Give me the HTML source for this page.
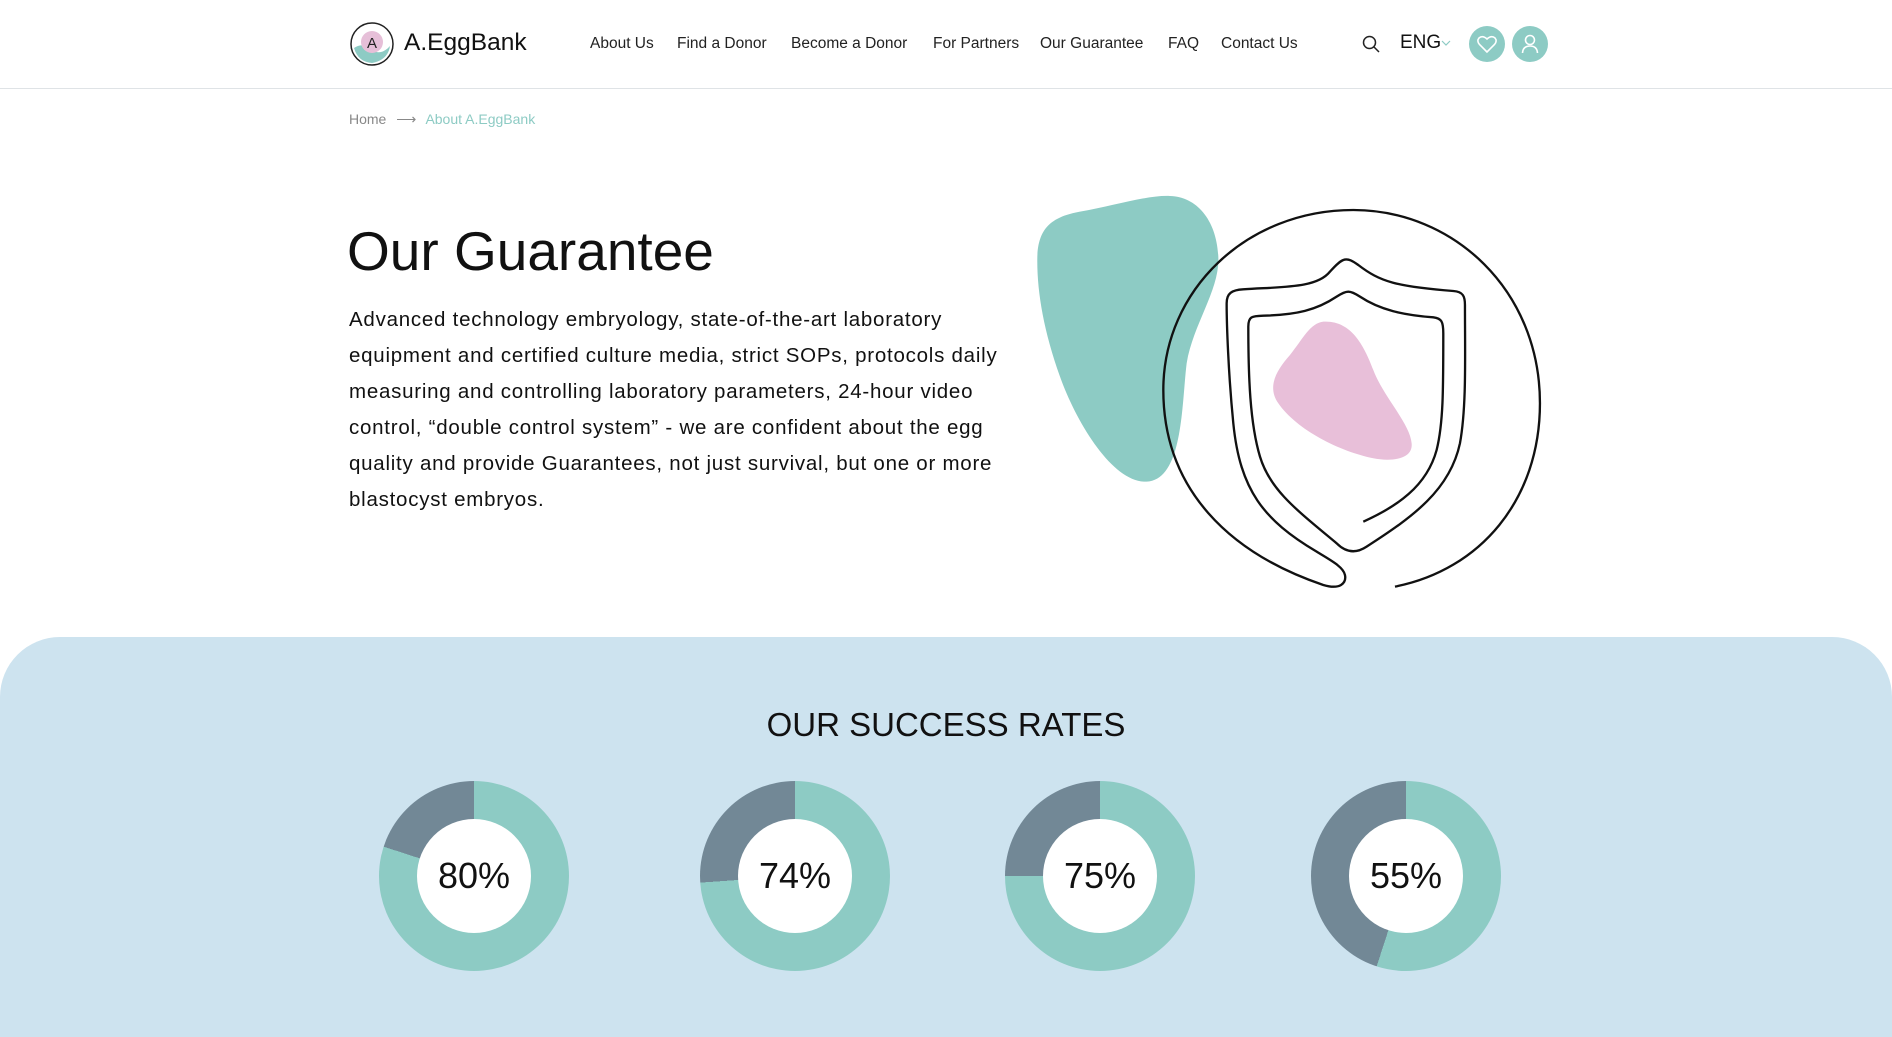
<!DOCTYPE html>
<html><head><meta charset="utf-8"><style>
*{margin:0;padding:0;box-sizing:border-box}
body{width:1892px;height:963px;overflow:hidden;background:#fff;font-family:"Liberation Sans",sans-serif;color:#111;position:relative}
.a{position:absolute;white-space:nowrap}
.nav{top:35px;font-size:15.5px;color:#222}
.hr{position:absolute;left:0;top:88px;width:1892px;height:1px;background:#dfe3e6}
.blue{position:absolute;left:0;top:637px;width:1892px;height:400px;background:#cde3ef;border-radius:60px 60px 0 0}
.d{position:absolute;width:190px;height:190px;border-radius:50%;top:781px}
.d i{position:absolute;left:38px;top:38px;width:114px;height:114px;border-radius:50%;background:#fff;font-style:normal;font-size:36px;text-align:center;line-height:114px;color:#111}
.c{position:absolute;width:36px;height:36px;border-radius:50%;background:#8dcbc4;top:26px}
</style></head><body>
<svg class="a" style="left:348px;top:20px" width="48" height="48" viewBox="0 0 48 48">
<circle cx="24" cy="24" r="21" fill="none" stroke="#222" stroke-width="1.5"/>
<path d="M6 28 Q15 22 24 30 Q33 36 42 26 Q40 40 24 43 Q10 42 6 28Z" fill="#8dcbc4"/>
<circle cx="24" cy="22" r="11" fill="#e6bfd8"/>
<text x="24" y="28" font-size="15" text-anchor="middle" font-family="Liberation Sans" fill="#222">A</text>
</svg>
<div class="a" style="left:404px;top:29px;font-size:24.5px;color:#111">A.EggBank</div>
<div class="a nav" style="left:590px">About Us</div>
<div class="a nav" style="left:677px">Find a Donor</div>
<div class="a nav" style="left:791px">Become a Donor</div>
<div class="a nav" style="left:933px">For Partners</div>
<div class="a nav" style="left:1040px">Our Guarantee</div>
<div class="a nav" style="left:1168px">FAQ</div>
<div class="a nav" style="left:1221px">Contact Us</div>
<svg class="a" style="left:1362px;top:35px" width="18" height="18" viewBox="0 0 18 18"><circle cx="7.5" cy="7.5" r="6" fill="none" stroke="#222" stroke-width="1.5"/><path d="M12 12l5 5" stroke="#222" stroke-width="1.5"/></svg>
<div class="a" style="left:1400px;top:32px;font-size:19px;color:#111">ENG</div>
<svg class="a" style="left:1441px;top:40px" width="10" height="7"><path d="M1 1l4 4 4-4" fill="none" stroke="#8dcbc4" stroke-width="1.2"/></svg>
<div class="c" style="left:1469px"><svg width="36" height="36" viewBox="0 0 36 36"><path d="M18 26 L10.5 18.5 Q7.5 15 10 12 Q13.5 9 18 13 Q22.5 9 26 12 Q28.5 15 25.5 18.5Z" fill="none" stroke="#fff" stroke-width="1.6"/></svg></div>
<div class="c" style="left:1512px"><svg width="36" height="36" viewBox="0 0 36 36"><circle cx="18" cy="14" r="4.5" fill="none" stroke="#fff" stroke-width="1.6"/><path d="M10.5 27 Q11 20 18 20 Q25 20 25.5 27" fill="none" stroke="#fff" stroke-width="1.6"/></svg></div>
<div class="hr"></div>
<div class="a" style="left:349px;top:111px;font-size:14px;color:#888">Home <span style="margin:0 6px">⟶</span> <span style="color:#8dcbc4">About A.EggBank</span></div>
<div class="a" style="left:347px;top:219px;font-size:55px;color:#111">Our Guarantee</div>
<div class="a" style="left:349px;top:302px;font-size:20.5px;letter-spacing:0.75px;line-height:36px;color:#111">Advanced technology embryology, state-of-the-art laboratory<br>equipment and certified culture media, strict SOPs, protocols daily<br>measuring and controlling laboratory parameters, 24-hour video<br>control, “double control system” - we are confident about the egg<br>quality and provide Guarantees, not just survival, but one or more<br>blastocyst embryos.</div>
<svg class="a" style="left:0;top:0" width="1892" height="640" viewBox="0 0 1892 640">
<g transform="translate(1030 190) scale(0.3333)">
<path d="M420 18 C500 20,560 90,565 200 C570 300,490 400,470 520 C455 640,460 870,350 875 C250 880,140 700,90 560 C40 420,20 300,22 200 C25 110,70 80,150 65 C250 48,350 15,420 18Z" fill="#8dcbc4"/>
<path d="M880 395 C960 390,1000 460,1030 540 C1060 620,1140 700,1145 760 C1150 810,1080 815,1030 805 C930 785,800 720,745 640 C710 590,740 540,780 495 C820 445,840 400,880 395Z" fill="#e8bfd9"/>
<path d="M1095 1190 C1350 1140,1530 930,1530 640 C1530 300,1270 60,970 60 C650 60,400 300,400 600 C400 900,600 1090,880 1185 C930 1200,950 1180,945 1155 C940 1130,900 1110,860 1085 C700 990,630 900,610 700 C595 550,590 400,590 340 C590 310,605 300,640 298 C760 290,860 295,900 245 C940 200,950 200,985 225 C1050 275,1100 290,1270 303 C1300 305,1305 320,1305 345 C1305 500,1310 650,1290 760 C1260 900,1150 980,1010 1070 C980 1090,950 1090,920 1060 C800 960,720 900,690 800 C660 700,655 560,655 410 C655 380,665 378,700 377 C800 375,860 360,920 320 C950 300,960 300,990 320 C1050 360,1120 375,1210 382 C1235 385,1240 395,1240 430 C1240 600,1240 700,1220 780 C1190 890,1100 950,1000 995" fill="none" stroke="#111" stroke-width="7"/>
</g></svg>
<div class="blue"></div>
<div class="a" style="left:0;width:1892px;text-align:center;top:706px;font-size:33px;color:#111">OUR SUCCESS RATES</div>
<div class="d" style="left:379px;background:conic-gradient(#8dcbc4 0 288deg,#728896 288deg 360deg)"><i>80%</i></div>
<div class="d" style="left:700px;background:conic-gradient(#8dcbc4 0 266deg,#728896 266deg 360deg)"><i>74%</i></div>
<div class="d" style="left:1005px;background:conic-gradient(#8dcbc4 0 270deg,#728896 270deg 360deg)"><i>75%</i></div>
<div class="d" style="left:1311px;background:conic-gradient(#8dcbc4 0 198deg,#728896 198deg 360deg)"><i>55%</i></div>
</body></html>
